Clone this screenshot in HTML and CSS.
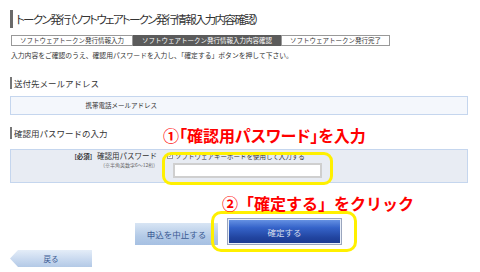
FILE: index.html
```html
<!DOCTYPE html>
<html lang="ja">
<head>
    <meta charset="UTF-8">
    <title>トークン発行</title>
    <link rel="stylesheet" href="styles.css">
</head>
<body>
<div class="page">
    <h1 class="title">トークン発行（ソフトウェアトークン発行情報入力内容確認）</h1>

    <ul class="steps">
        <li>ソフトウェアトークン発行情報入力</li>
        <li class="current">ソフトウェアトークン発行情報入力内容確認</li>
        <li>ソフトウェアトークン発行完了</li>
    </ul>

    <p class="lead">入力内容をご確認のうえ、確認用パスワードを入力し、「確定する」ボタンを押して下さい。</p>

    <!-- 送付先 -->
    <h2 class="sec">送付先メールアドレス</h2>
    <div class="box box-mail">
        <div class="label">携帯電話メールアドレス</div>
        <div class="value"></div>
    </div>

    <!-- パスワード -->
    <h2 class="sec sec-pass">確認用パスワードの入力</h2>
    <div class="box box-pass">
        <div class="label">
            <div class="label-main"><span class="req">[必須]</span> 確認用パスワード</div>
            <div class="label-sub">(※半角英数字6～12桁)</div>
        </div>
        <div class="field">
            <div class="check-row">
                <span class="check">
                    <svg width="6" height="6" viewBox="0 0 6 6"><path d="M1 3 L2.4 4.6 L5 1.2" fill="none" stroke="#555" stroke-width="0.9"/></svg>
                </span>
                ソフトウェアキーボードを使用して入力する
            </div>
            <div class="pass-input"></div>
        </div>
    </div>

    <div class="actions">
        <button class="btn-cancel">申込を中止する</button>
        <button class="btn-ok">確定する</button>
    </div>

    <div class="back">
        <a class="btn-back">戻る</a>
    </div>

    <!-- 注釈 -->
    <div class="ring ring1"></div>
    <div class="ring ring2"></div>
    <div class="note note1">①「確認用パスワード」を入力</div>
    <div class="note note2">②「確定する」をクリック</div>
</div>
</body>
</html>
```

FILE: styles.css
```css
body {
    margin: 0;
    font-family: "Noto Sans CJK JP", "Noto Sans", sans-serif;
    color: #333;
    background: #fff;
}

.page {
    position: relative;
    width: 480px;
    height: 272px;
    padding: 10px 12px 0 10px;
    box-sizing: border-box;
    overflow: hidden;
}

/* Title */
.title {
    margin: 0;
    height: 18px;
    line-height: 18px;
    font-size: 11.5px;
    font-weight: normal;
    letter-spacing: -1.7px;
    border-left: 3px solid #6a6a6a;
    padding-left: 3px;
    font-feature-settings: "palt";
    white-space: nowrap;
}

/* Steps */
.steps {
    display: flex;
    margin: 7px 0 0 1px;
    padding: 0;
    list-style: none;
    height: 11px;
}

.steps li {
    padding: 0 8px;
    font-size: 6.5px;
    line-height: 9px;
    border: 1px solid #999;
    background: #fff;
    white-space: nowrap;
}

.steps li.current {
    background: #5b5b5b;
    border-color: #5b5b5b;
    color: #fff;
}

.lead {
    margin: 4px 0 0 1px;
    font-size: 6.8px;
    line-height: 10px;
    white-space: nowrap;
}

/* Sections */
.sec {
    margin: 17px 0 0 0;
    height: 12px;
    line-height: 12px;
    font-size: 8.5px;
    font-weight: normal;
    border-left: 2px solid #777;
    padding-left: 2px;
}

.sec-pass {
    margin-top: 12px;
}

.box {
    display: flex;
    margin-top: 7px;
    border: 1px solid #c5d6ee;
    background: #f4f7fc;
}

.box-mail {
    height: 17px;
}

.box .label {
    width: 146px;
    padding-right: 6px;
    text-align: right;
    font-size: 6.5px;
    line-height: 17px;
    white-space: nowrap;
}

.box-pass {
    margin-top: 10px;
    height: 32px;
    background: #e8ecf3;
}

.box-pass .label {
    padding-top: 1px;
    line-height: normal;
}

.label-main {
    font-size: 7.5px;
    line-height: 10px;
}

.req {
    font-size: 6.5px;
    font-weight: bold;
    margin-right: 3px;
}

.label-sub {
    font-size: 5px;
    line-height: 8px;
    color: #666;
    padding-right: 2px;
}

.field {
    padding: 1px 0 0 4px;
}

.check-row {
    display: flex;
    align-items: center;
    gap: 2px;
    font-size: 6.5px;
    line-height: 10px;
    white-space: nowrap;
}

.check {
    display: inline-flex;
    width: 6px;
    height: 6px;
    border: 1px solid #999;
    background: #fff;
    box-sizing: border-box;
}

.check svg {
    width: 100%;
    height: 100%;
}

.pass-input {
    margin: 2px 0 0 6px;
    width: 149px;
    height: 15px;
    box-sizing: border-box;
    border: 2px solid #cfcfcf;
    background: #fff;
}

/* Buttons */
.actions {
    display: flex;
    align-items: flex-end;
    margin: 34px 0 0 125px;
    height: 28px;
}

.actions button {
    font-family: inherit;
    padding: 0;
    cursor: pointer;
}

.btn-cancel {
    width: 83px;
    height: 22px;
    border: none;
    background: linear-gradient(#d8e5f4, #b3cae7 60%, #a6c0e2);
    color: #3a5a92;
    font-size: 8.5px;
}

.btn-ok {
    align-self: flex-start;
    margin: 1px 0 0 9px;
    width: 115px;
    height: 27px;
    border: 1px solid #9aa6bd;
    box-shadow: inset 0 0 0 1px #e8eef8;
    background: linear-gradient(#6a96e6, #3563c9 35%, #21449f 75%, #1a3890);
    color: #d6deec;
    font-size: 8.5px;
}

.back {
    margin-top: 5px;
}

.btn-back {
    display: flex;
    align-items: center;
    justify-content: center;
    width: 82px;
    height: 17px;
    font-size: 7.5px;
    color: #3a5a92;
    background: linear-gradient(#e4edf8, #c6d7ee 60%, #b3c9e6);
    clip-path: polygon(0 50%, 8px 0, 100% 0, 100% 100%, 8px 100%);
}

/* Annotations */
.ring {
    position: absolute;
    border: 3px solid #fff000;
    box-sizing: border-box;
}

.ring1 {
    left: 162px;
    top: 152px;
    width: 171px;
    height: 33px;
    border-radius: 9px;
}

.ring2 {
    left: 211px;
    top: 211px;
    width: 146px;
    height: 41px;
    border-radius: 10px;
}

.note {
    position: absolute;
    color: #f00;
    font-weight: bold;
    font-size: 16px;
    line-height: 22px;
    white-space: nowrap;
}

.note1 {
    left: 163px;
    top: 124px;
    font-feature-settings: "palt";
}

.note2 {
    left: 222px;
    top: 192px;
}
```
